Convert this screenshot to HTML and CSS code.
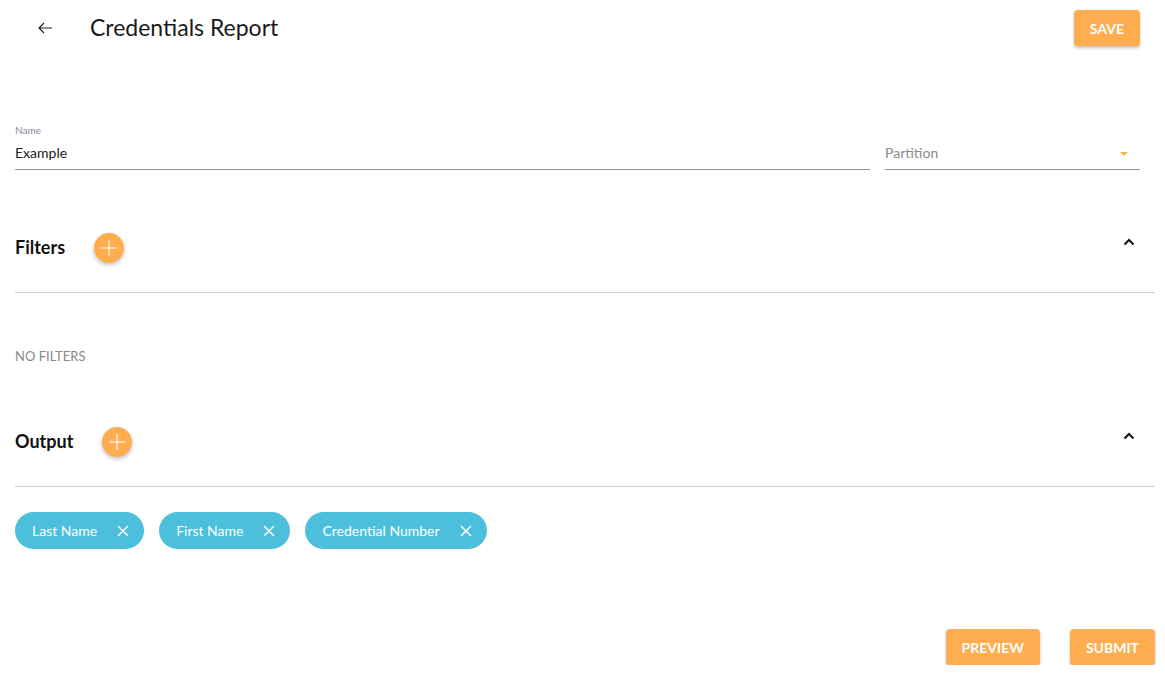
FILE: index.html
```html
<!DOCTYPE html>
<html lang="en">
<head>
    <meta charset="UTF-8">
    <meta name="viewport" content="width=device-width, initial-scale=1.0">
    <title>Credentials Report</title>
    <link rel="stylesheet" href="styles.css">
</head>
<body>
    <div class="page">
        <header class="topbar">
            <button class="back-btn" aria-label="Back">
                <svg width="16" height="16" viewBox="0 0 16 16"><path d="M15 8H2M7 3L2 8l5 5" fill="none" stroke="#222" stroke-width="1.2"/></svg>
            </button>
            <h1 class="title">Credentials Report</h1>
            <button class="btn save-btn">SAVE</button>
        </header>

        <div class="fields">
            <div class="field name-field">
                <label>Name</label>
                <div class="field-value">Example</div>
            </div>
            <div class="field partition-field">
                <div class="field-value placeholder">Partition</div>
                <span class="caret"></span>
            </div>
        </div>

        <section class="section">
            <div class="section-head">
                <h2>Filters</h2>
                <button class="add-btn" aria-label="Add filter">
                    <svg width="18" height="18" viewBox="0 0 18 18"><path d="M9 1v16M1 9h16" stroke="#fff" stroke-width="1.2"/></svg>
                </button>
                <span class="chevron">
                    <svg width="12" height="8" viewBox="0 0 12 8"><path d="M1.5 6.5L6 2l4.5 4.5" fill="none" stroke="#111" stroke-width="2"/></svg>
                </span>
            </div>
            <div class="section-body">
                <p class="empty">NO FILTERS</p>
            </div>
        </section>

        <section class="section">
            <div class="section-head">
                <h2>Output</h2>
                <button class="add-btn" aria-label="Add output">
                    <svg width="18" height="18" viewBox="0 0 18 18"><path d="M9 1v16M1 9h16" stroke="#fff" stroke-width="1.2"/></svg>
                </button>
                <span class="chevron">
                    <svg width="12" height="8" viewBox="0 0 12 8"><path d="M1.5 6.5L6 2l4.5 4.5" fill="none" stroke="#111" stroke-width="2"/></svg>
                </span>
            </div>
            <div class="chips">
                <span class="chip">Last Name <svg width="12" height="12" viewBox="0 0 12 12"><path d="M1 1l10 10M11 1L1 11" stroke="#fff" stroke-width="1.5"/></svg></span>
                <span class="chip">First Name <svg width="12" height="12" viewBox="0 0 12 12"><path d="M1 1l10 10M11 1L1 11" stroke="#fff" stroke-width="1.5"/></svg></span>
                <span class="chip">Credential Number <svg width="12" height="12" viewBox="0 0 12 12"><path d="M1 1l10 10M11 1L1 11" stroke="#fff" stroke-width="1.5"/></svg></span>
            </div>
        </section>

        <footer class="actions">
            <button class="btn">PREVIEW</button>
            <button class="btn">SUBMIT</button>
        </footer>
    </div>
</body>
</html>
```

FILE: styles.css
```css
body {
    margin: 0;
    font-family: Lato, "Open Sans", sans-serif;
    background-color: white;
    color: #222;
}
button {
    font-family: inherit;
    cursor: pointer;
}
.page {
    padding: 0 10px 0 15px;
}
.topbar {
    display: flex;
    align-items: center;
    height: 56px;
}
.back-btn {
    border: none;
    background: none;
    padding: 0;
    margin-left: 22px;
    width: 16px;
    height: 16px;
    display: flex;
}
.title {
    font-size: 23px;
    font-weight: 400;
    margin: 0 0 2px 37px;
    color: #1a1a1a;
    flex: 1;
}
.btn {
    background-color: #ffad4f; /* orange */
    color: white;
    border: none;
    border-radius: 4px;
    font-size: 14px;
    font-weight: 700;
    height: 36px;
    padding: 0 16px;
    box-shadow: 0 2px 3px rgba(0, 0, 0, 0.25);
}
.save-btn {
    margin-right: 15px;
}
.fields {
    display: flex;
    gap: 15px;
    margin-top: 66px;
    padding-right: 15px;
}
.field {
    border-bottom: 1px solid #949494;
    height: 47px;
    display: flex;
    flex-direction: column;
    justify-content: flex-end;
    position: relative;
}
.name-field {
    flex: 1;
}
.partition-field {
    width: 255px;
}
.field label {
    font-size: 10px;
    color: #8f87a3;
    margin-bottom: 8px;
}
.field-value {
    font-size: 14px;
    line-height: 18px;
    padding-bottom: 7px;
}
.placeholder {
    color: #8a8a8a;
}
.caret {
    position: absolute;
    right: 12px;
    top: 30px;
    border-left: 4px solid transparent;
    border-right: 4px solid transparent;
    border-top: 4px solid #ffad4f;
}
.section {
    margin-top: 31px;
}
.section-head {
    display: flex;
    align-items: center;
    height: 92px;
    border-bottom: 1px solid #cfcfcf;
    box-sizing: border-box;
}
.section-head h2 {
    font-size: 18px;
    font-weight: 700;
    margin: 0;
    color: #111;
}
.add-btn {
    width: 30px;
    height: 30px;
    border-radius: 50%;
    border: none;
    background-color: #ffad4f;
    margin-left: 29px;
    margin-top: 3px;
    display: flex;
    align-items: center;
    justify-content: center;
    padding: 0;
    box-shadow: 0 2px 4px rgba(0, 0, 0, 0.25);
}
.chevron {
    margin-left: auto;
    margin-right: 20px;
    margin-top: -9px;
    display: flex;
}
.section-body {
    height: 71px;
}
.empty {
    margin: 0;
    padding-top: 55px;
    font-size: 13px;
    color: #8a8a8a;
}
.chips {
    display: flex;
    gap: 15px;
    padding-top: 25px;
}
.chip {
    display: flex;
    align-items: center;
    gap: 20px;
    height: 37px;
    padding: 0 15px 0 17px;
    border-radius: 19px;
    background-color: #4cbfdc;
    color: white;
    font-size: 14px;
}
.actions {
    display: flex;
    justify-content: flex-end;
    gap: 30px;
    margin-top: 80px;
}
```
